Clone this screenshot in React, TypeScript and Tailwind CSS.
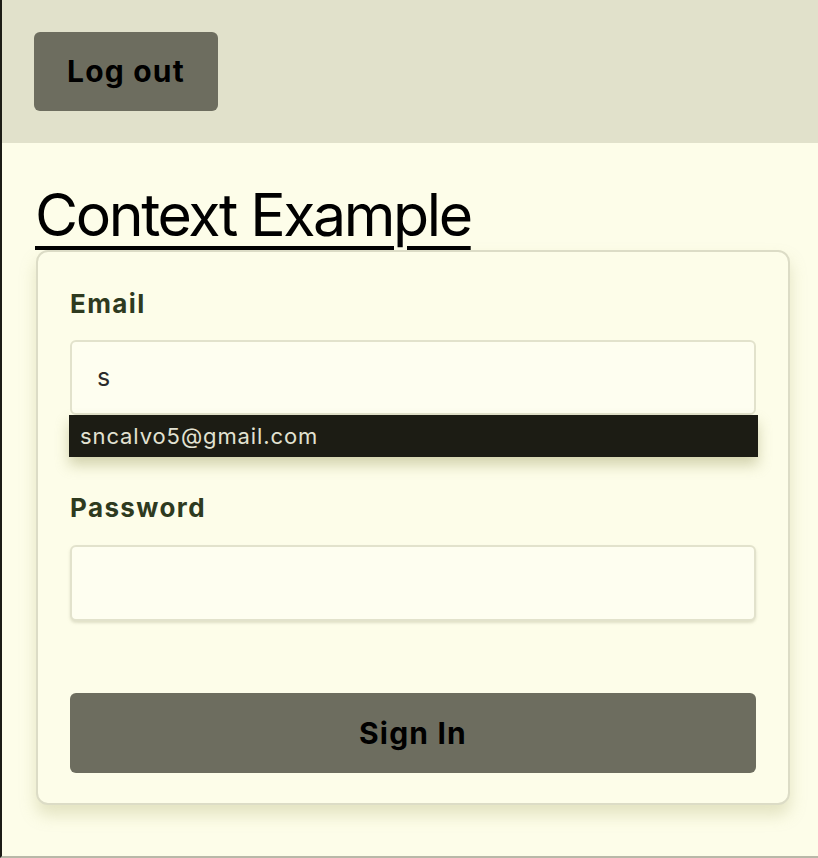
export default function App() {
  const font = { fontFamily: 'Inter, "Noto Sans", sans-serif' }
  return (
    <div
      className="min-h-[858px] bg-[#fdfde9] border-l-2 border-[#1c1c16] border-b-2 border-b-[#b8b8a8] flex flex-col"
      style={font}
    >
      {/* Header */}
      <header className="h-[143px] bg-[#e1e1cb] px-[32px] pt-[32px] shrink-0">
        <button className="w-[184px] h-[79px] rounded-[6px] bg-[#6d6d5f] text-[30px] tracking-[1.2px] font-bold text-black">
          Log out
        </button>
      </header>

      {/* Main */}
      <main className="px-[33px] pt-[40px]">
        <h1 className="text-[59px] leading-[64px] tracking-[-2.4px] text-black underline decoration-[4px] underline-offset-[10px]">
          Context Example
        </h1>

        <div className="mt-[3px] ml-[1px] w-[754px] rounded-[12px] border-2 border-[#dcdcc6] bg-[#fdfde9] px-[32px] pt-[37px] pb-[30px] shadow-[0_10px_16px_rgba(180,180,120,0.35)]">
          <label className="block text-[26px] tracking-[1.4px] font-bold leading-[30px] text-[#2e3a1f]">Email</label>
          <div className="relative mt-[21px]">
            <div className="h-[75px] rounded-[6px] border-2 border-[#e2e2cc] bg-[#fefef0] pl-[25px] flex items-center text-[25px] text-[#2b2b2b]">
              s
            </div>
            <div className="absolute left-[-1px] right-[-2px] top-[75px] h-[42px] bg-[#1c1c14] text-[#e2e2d2] text-[22px] tracking-[0.9px] pl-[11px] flex items-center shadow-[0_8px_14px_rgba(160,160,100,0.45)]">
              sncalvo5@gmail.com
            </div>
          </div>

          <label className="mt-[78px] block text-[26px] tracking-[1.4px] font-bold leading-[30px] text-[#2e3a1f]">Password</label>
          <div className="mt-[22px] h-[76px] rounded-[6px] border-2 border-[#e2e2cc] bg-[#fefef0] shadow-[0_2px_3px_rgba(180,180,150,0.4)]" />

          <button className="mt-[72px] w-full h-[80px] rounded-[6px] bg-[#6d6d5f] text-[30px] tracking-[1.2px] font-bold text-black">
            Sign In
          </button>
        </div>
      </main>
    </div>
  )
}
